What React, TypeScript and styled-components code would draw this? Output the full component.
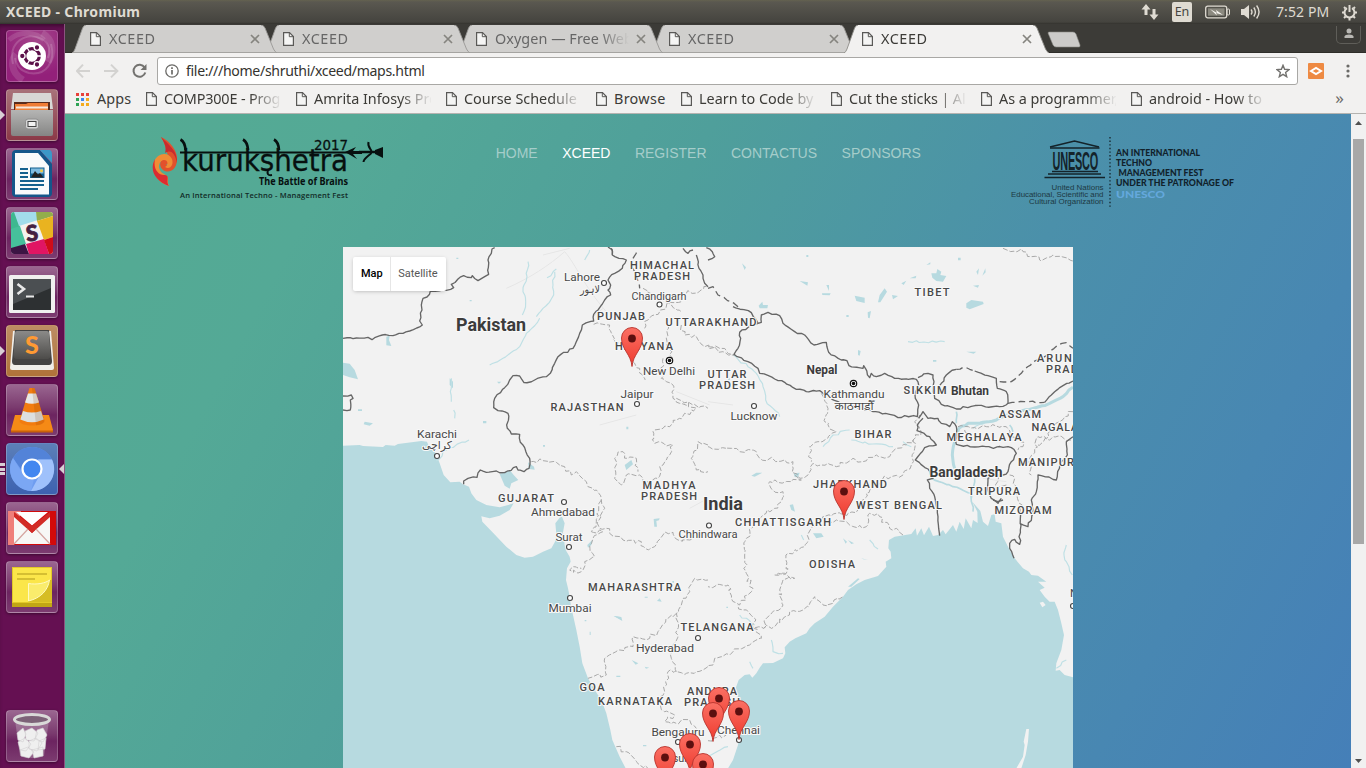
import React from 'react';
import styled, { createGlobalStyle } from 'styled-components';

const UI = '"Noto Sans", "Open Sans", sans-serif';

const Global = createGlobalStyle`
  * { box-sizing: border-box; }
  body { margin: 0; overflow: hidden; font-family: ${UI}; }
  svg { display: block; flex: none; }
`;

const Desktop = styled.div`
  width: 1366px;
  height: 768px;
  display: flex;
  flex-direction: column;
  overflow: hidden;
`;

/* ---------- top panel ---------- */

const Panel = styled.header`
  height: 24px;
  flex: none;
  display: flex;
  align-items: center;
  padding: 0 8px 0 6px;
  background: linear-gradient(#64624f 0, #5a5850 2px, #45443f 22px, #33322e 24px);
  color: #dfdbd2;
`;

const WindowTitle = styled.span`
  flex: 1;
  font-size: 14px;
  font-weight: 700;
  line-height: 22px;
  letter-spacing: 0.32px;
`;

const Keyboard = styled.span`
  width: 20px;
  height: 20px;
  margin: 0 13px 0 13px;
  border-radius: 2px;
  background: #dfdbd2;
  color: #45443f;
  font-size: 12.5px;
  line-height: 20px;
  text-align: center;
`;

const Clock = styled.span`
  margin: 0 12px 0 15px;
  font-size: 14px;
  line-height: 22px;
  letter-spacing: 0.1px;
  width: 53px;
  white-space: nowrap;
`;

const Body = styled.div`
  flex: 1;
  min-height: 0;
  display: flex;
`;

/* ---------- launcher ---------- */

const Dock = styled.aside`
  width: 65px;
  flex: none;
  display: flex;
  flex-direction: column;
  gap: 7px;
  padding: 6px 0 6px 6px;
  background: #651052;
  border-right: 1px solid #8c5380;
  box-shadow: inset 0 4px 4px -2px #3c0a31;
`;

const Tile = styled.div<{ $bg: string; $gap?: boolean }>`
  position: relative;
  width: 52px;
  height: 52px;
  flex: none;
  margin-top: ${(p) => (p.$gap ? 'auto' : 0)};
  border-radius: 4px;
  border: 1px solid rgba(255, 255, 255, 0.22);
  background: ${(p) => p.$bg};
  box-shadow: 0 1px 3px rgba(0, 0, 0, 0.4);
  display: flex;
  align-items: center;
  justify-content: center;
`;

const Running = styled.i<{ $right?: boolean }>`
  position: absolute;
  top: 20px;
  ${(p) => (p.$right ? 'right: -7px;' : 'left: -7px;')}
  border: solid transparent;
  border-width: 5px 0;
  ${(p) => (p.$right ? 'border-right: 5px solid #d8cfd5;' : 'border-left: 5px solid #d8cfd5;')}
`;

const Ticks = styled.i`
  position: absolute;
  top: 19px;
  left: -7px;
  width: 5px;
  height: 12px;
  background: repeating-linear-gradient(#d8cfd5 0 3px, transparent 3px 4.5px);
`;

/* ---------- browser chrome ---------- */

const Browser = styled.main`
  flex: 1;
  min-width: 0;
  display: flex;
  flex-direction: column;
  background: #f2f1f0;
`;

const TabStrip = styled.div`
  height: 29px;
  flex: none;
  display: flex;
  padding: 1px 1px 0 6.5px;
  background: #3c3b37;
  box-shadow: inset 0 -1px #2e2d29;
`;

const TabBox = styled.div<{ $z: number; $active?: boolean }>`
  position: relative;
  z-index: ${(p) => p.$z};
  width: 205px;
  height: 28px;
  margin-right: -12px;
  padding: 0 17px 0 18px;
  display: flex;
  align-items: center;
  flex: none;
  color: ${(p) => (p.$active ? '#3c3b37' : '#666')};
`;

const TabShape = styled.svg`
  position: absolute;
  inset: 0;
  z-index: -1;
`;

const TabText = styled.span<{ $track: number }>`
  flex: 1;
  margin-left: 8.5px;
  font-size: 14.4px;
  line-height: 26px;
  letter-spacing: ${(p) => p.$track}px;
  white-space: nowrap;
  overflow: hidden;
  mask-image: linear-gradient(to right, #000 105px, transparent 134px);
`;

const NewTab = styled.svg`
  margin: 6px 0 0 10px;
`;

const Profile = styled.div`
  width: 25px;
  height: 18px;
  margin-left: auto;
  margin-top: 1px;
  margin-right: 4px;
  border: 1px solid #5f5e59;
  border-top: 0;
  border-radius: 0 0 5px 5px;
  display: flex;
  justify-content: center;
`;

const Toolbar = styled.div`
  height: 36px;
  flex: none;
  display: flex;
  align-items: center;
  padding: 0 16px 0 11px;
`;

const Address = styled.div`
  flex: 1;
  height: 28px;
  margin: 0 10px 0 10px;
  padding: 0 7px;
  display: flex;
  align-items: center;
  background: #fff;
  border: 1px solid #a9a8a5;
  border-radius: 3px;
`;

const Url = styled.span`
  flex: 1;
  margin-left: 7px;
  font-size: 14.1px;
  line-height: 24px;
  letter-spacing: -0.33px;
  color: #34332f;
`;

const Bookmarks = styled.div`
  height: 25px;
  flex: none;
  display: flex;
  padding: 1px 22px 0 11px;
  border-bottom: 1px solid #b4b3b0;
`;

const Bookmark = styled.div<{ $w: number }>`
  width: ${(p) => p.$w}px;
  display: flex;
  align-items: center;
  height: 18px;
`;

const BookmarkText = styled.span<{ $track?: number; $fade?: boolean }>`
  max-width: 117px;
  margin-left: ${(p) => (p.$fade === undefined ? 8 : 7)}px;
  font-size: 14.4px;
  line-height: 20px;
  letter-spacing: ${(p) => p.$track ?? -0.1}px;
  white-space: nowrap;
  overflow: hidden;
  color: #3c3b37;
  mask-image: ${(p) => (p.$fade ? 'linear-gradient(to right, #000 86px, transparent 118px)' : 'none')};
`;

const More = styled.span`
  margin-left: auto;
  font-size: 17px;
  line-height: 16px;
  color: #6c6b68;
`;

/* ---------- page ---------- */

const Viewport = styled.div`
  flex: 1;
  min-height: 0;
  display: flex;
`;

const Page = styled.div`
  flex: 1;
  background: linear-gradient(118deg, #54ab92 0%, #54a996 18%, #4f9f9b 40%, #4b90aa 64%, #4887b2 84%, #457fb8 100%);
  display: flex;
  flex-direction: column;
`;

const Header = styled.div`
  height: 133px;
  flex: none;
  display: flex;
  align-items: flex-start;
`;

const Nav = styled.nav`
  display: flex;
  gap: 24.5px;
  margin: 31px 0 0 95.7px;
  width: 509.3px;
  font: 14px/16px "Liberation Sans", Arial, sans-serif;
`;

const NavItem = styled.a<{ $on?: boolean }>`
  color: ${(p) => (p.$on ? '#fff' : '#a5cdca')};
`;

const MapFrame = styled.div`
  position: relative;
  width: 730px;
  height: 521px;
  margin-left: 278px;
  overflow: hidden;
`;

const MapType = styled.div`
  position: absolute;
  left: 10px;
  top: 10px;
  display: flex;
  height: 34px;
  background: #fff;
  border-radius: 2px;
  box-shadow: 0 1px 4px -1px rgba(0, 0, 0, 0.3);
  font: 11px/33px Roboto, sans-serif;
`;

const MapButton = styled.span<{ $on?: boolean }>`
  padding: ${(p) => (p.$on ? '0 7px 0 8px' : '0 8px 0 7.5px')};
  font-weight: ${(p) => (p.$on ? 500 : 400)};
  color: ${(p) => (p.$on ? '#000' : '#565656')};
  border-right: ${(p) => (p.$on ? '1px solid #e6e6e6' : 0)};
`;

const Scroll = styled.div`
  width: 15px;
  display: flex;
  flex-direction: column;
  align-items: center;
  justify-content: space-between;
  background: #f1f1f1;
  padding: 7px 0 5px;
`;

const Thumb = styled.div`
  width: 11px;
  height: 405px;
  margin: 14px 0 auto;
  background: #a8a8a8;
`;

/* ---------- small icons ---------- */

const PageIcon = () => (
  <svg width="11" height="14" viewBox="0 0 11 14" fill="none" stroke="#5a5957">
    <path d="M.6 .6H6.5L10.4 4.5V13.4H.6Z" strokeWidth="1.2" fill="#f5f5f4" />
    <path d="M6.3 .6V4.7H10.4" strokeWidth="1" />
  </svg>
);

const Arrow = ({ flip }: { flip?: boolean }) => (
  <svg width="28" height="16" viewBox="0 0 28 16" fill="none" stroke="#d3d2d0" strokeWidth="2">
    <path d={flip ? 'M0 8H13M7 1.6L13.4 8L7 14.4' : 'M14 8H1M7 1.6L.9 8L7 14.4'} />
  </svg>
);

const Tab = ({ text, z, active }: { text: string; z: number; active?: boolean }) => (
  <TabBox $z={z} $active={active}>
    <TabShape width="205" height="28" viewBox="0 0 205 28">
      <path
        d="M0 28Q2 27 3 24L10.600 3Q12 0 14 0H189Q191.500 0 193 3L201.500 24Q203 27 205 28Z"
        fill={active ? '#f2f1f0' : '#d0cfcd'}
      />
      <path
        d="M0 28Q2 27 3 24L10.600 3Q12 0 14 0M189 0Q191.500 0 193 3L201.500 24Q203 27 205 28"
        fill="none"
        stroke={active ? '#8d8c88' : '#9a9996'}
        strokeWidth=".9"
      />
      {!active && <path d="M1 27.500H204" stroke="#a5a4a1" />}
    </TabShape>
    <PageIcon />
    <TabText $track={text === 'XCEED' ? 0.55 : 0.05}>{text}</TabText>
    <svg width="10" height="10" viewBox="0 0 10 10" stroke="#85847f" strokeWidth="1.700">
      <path d="M1 1L9 9M9 1L1 9" />
    </svg>
  </TabBox>
);

/* ---------- launcher artwork ---------- */

const Art = ({ children }: { children: React.ReactNode }) => (
  <svg width="52" height="52" viewBox="0 0 52 52">
    {children}
  </svg>
);

const UbuntuArt = () => (
  <Art>
    <g fill="none" stroke="#fff" strokeOpacity=".16">
      <path d="M7 34C2 12 20 1 36 9C43 13 45 21 42 28" strokeWidth="2" />
      <path d="M45 14C50 32 40 46 23 43C15 41 11 37 9 28" strokeWidth="2" />
      <path d="M17 50C4 42 5 30 10 24" strokeWidth="7" strokeOpacity=".12" />
      <path d="M36 3C48 10 48 22 42 32" strokeWidth="7" strokeOpacity=".12" />
      <path d="M3 10C14 0 30 2 38 10" strokeWidth="5" strokeOpacity=".12" />
    </g>
    <circle cx="26" cy="26" r="14" fill="#fff" />
    <circle cx="26" cy="26" r="7.300" fill="none" stroke="#5b1049" strokeWidth="3.200" />
    <g stroke="#fff" strokeWidth="1.300">
      <path d="M26 26L36 26M26 26L21 34.500M26 26L21 17.500" />
      <circle cx="26" cy="26" r="4.500" fill="#fff" />
      <circle cx="16.300" cy="26" r="2.800" fill="#5b1049" />
      <circle cx="31" cy="17.500" r="2.800" fill="#5b1049" />
      <circle cx="31" cy="34.500" r="2.800" fill="#5b1049" />
    </g>
  </Art>
);

const FilesArt = () => (
  <Art>
    <path d="M7 4H45L47 20H5Z" fill="#d8d8d6" />
    <path d="M8 13H44V24H8Z" fill="#5a2c1c" />
    <path d="M9 15H20L22 14H42V24H9Z" fill="#ef7d36" />
    <path d="M10 17.500H42V24H10Z" fill="#f6e8dc" />
    <path d="M10 19.500H42V24H10Z" fill="#f0843c" />
    <path d="M5 21H47V45Q47 47 45 47H7Q5 47 5 45Z" fill="url(#steel)" />
    <rect x="19.500" y="30" width="13" height="10" rx="2.500" fill="#d6d6d6" stroke="#8e8e8e" />
    <rect x="22" y="32.500" width="8" height="5" fill="#f2f2f2" stroke="#444" strokeWidth="1" />
  </Art>
);

const WriterArt = () => (
  <Art>
    <path d="M10 2H34L46 16V45Q46 49 42 49H10Q6 49 6 45V6Q6 2 10 2Z" fill="#14568a" />
    <path d="M34 2H44Q46 3 46 6V15Z" fill="#3b98c8" />
    <path d="M9 5H32L43 18V46.500H9Z" fill="#f8fafb" />
    <g fill="#14618f">
      <path d="M14 20H22V22H14ZM14 24H22V26H14ZM14 28H22V30H14ZM14 32H38V34H14ZM14 36H38V38H14ZM14 40H32V42H14Z" />
      <rect x="24" y="19.500" width="14.500" height="10.500" />
    </g>
    <rect x="25" y="20.500" width="12.500" height="5" fill="#7fbbe0" />
    <path d="M25 29.500L29 23L32 26.500L34 25L37.500 29.500Z" fill="#222" />
    <circle cx="35.500" cy="22.700" r="1.500" fill="#f0cb45" />
  </Art>
);

const SlackArt = () => (
  <Art>
    <clipPath id="slack"><rect x="5" y="5" width="42" height="42" rx="3" /></clipPath>
    <g clipPath="url(#slack)">
      <rect x="5" y="5" width="42" height="42" fill="#f4f1ee" />
      <path d="M5 5H9L14 20L5 23Z" fill="#3eb890" />
      <path d="M8 5H30L32 13L13 19Z" fill="#a2dcea" />
      <path d="M30 5H47V9L31 14Z" fill="#92ad4b" />
      <path d="M31 14L47 9V30L38 33Z" fill="#e9b320" />
      <path d="M5 22L14 19L20 37L5 42Z" fill="#46c09b" />
      <path d="M20 37L38 32L43 47H23Z" fill="#e01563" />
      <path d="M38 33L47 30V47H43Z" fill="#cf0c19" />
      <path d="M5 41L19 37L23 47H5Z" fill="#3c1444" />
    </g>
    <text x="26" y="34" textAnchor="middle" fontFamily="Lato, sans-serif" fontWeight="900" fontSize="22" fill="#46203f" stroke="#46203f" strokeWidth=".8" transform="rotate(-6 26 26)">S</text>
  </Art>
);

const TerminalArt = () => (
  <Art>
    <rect x="3" y="9" width="46" height="38" rx="1.500" fill="#f0f0ef" />
    <rect x="7" y="13" width="38" height="31" fill="#2d3032" />
    <path d="M7 13H45V22L7 38Z" fill="#595d60" opacity=".7" />
    <path d="M11.500 18L18 23L11.500 28" fill="none" stroke="#e8e8e8" strokeWidth="2.600" />
    <path d="M20 30.500H28" stroke="#e8e8e8" strokeWidth="2" />
  </Art>
);

const SublimeArt = () => (
  <Art>
    <path d="M7 6H45L48 43Q48 45 46 45H6Q4 45 4 43Z" fill="#f0eee9" />
    <path d="M9 5H43L46 36Q46 40 43 40H9Q6 40 6 36Z" fill="#444342" />
    <path d="M11 6H41Q43 6 43 8L44.500 30Q44.500 34 41 34H11Q7.500 34 7.500 30L9 8Q9 6 11 6Z" fill="url(#key)" />
    <text x="26" y="28.500" textAnchor="middle" fontFamily="Lato, sans-serif" fontWeight="900" fontSize="25" fill="#ff9a33">S</text>
  </Art>
);

const VlcArt = () => (
  <Art>
    <path d="M9 31H43L47 46Q47 48 45 48H7Q5 48 5 46Z" fill="#f58a16" />
    <path d="M5 46.500H47V48.500H5Z" fill="#c9620a" />
    <path d="M23.500 4H28.500L38.500 37C38 43 14 43 13.500 37Z" fill="#f27c10" />
    <path d="M22 9.500H30L33 18.500Q26 21 19 18.500Z" fill="#e6e8e8" />
    <path d="M17 27Q26 30 35 27L37.700 35.500Q26 41 14.300 35.500Z" fill="#dcdfe0" />
    <path d="M26 4H28.500L38.500 37Q37 41 30 41.300Z" fill="#7a3500" opacity=".16" />
  </Art>
);

const ChromiumArt = () => (
  <Art>
    <circle cx="26" cy="26" r="22" fill="#6f9df0" />
    <path d="M26 4A22 22 0 0 1 46 16.500H26L17 29L7 15A22 22 0 0 1 26 4Z" fill="#5383d8" />
    <path d="M7 15L17 31L28 36L25 48A22 22 0 0 1 7 15Z" fill="#7ba7f4" />
    <path d="M46 16.500A22 22 0 0 1 25 48L36 28L32 16.500Z" fill="#9fc1fb" />
    <circle cx="26" cy="26" r="9.500" fill="#4387f0" stroke="#fff" strokeWidth="2.200" />
  </Art>
);

const GmailArt = () => (
  <Art>
    <rect x="2" y="9" width="48" height="34" fill="#d20a0a" />
    <path d="M2 9H15L8 43H2Z" fill="#ef7f7a" />
    <path d="M8 14L26 31L44 14V42H8Z" fill="#f7f7f5" />
    <path d="M10 10H42L26 23.500Z" fill="#fff" />
    <path d="M8 10L26 24L44 10V15L26 31L8 15Z" fill="#d22c26" />
    <path d="M8 42L22 27M44 42L30 27" stroke="#d5a5a0" strokeWidth="1.200" />
  </Art>
);

const NotesArt = () => (
  <Art>
    <rect x="6" y="40" width="40" height="6" fill="#c1a615" />
    <rect x="6.500" y="6.500" width="39" height="35" fill="#fbe64a" stroke="#e2c928" />
    <path d="M11 13H41M11 18H29" stroke="#d5bf32" strokeWidth="2" />
    <path d="M22 41L27 33L43 19H46V41Z" fill="#d6bd24" />
    <path d="M22.500 40V22.500C31 24 40 22 43.500 19C42 29 35 37 22.500 40Z" fill="#faec6c" stroke="#fffac0" />
  </Art>
);

const TrashArt = () => (
  <Art>
    <path d="M9 10L14 46Q26 50 38 46L43 10Z" fill="#d8cdd6" opacity=".3" />
    <g fill="#efefef" stroke="#d2d0d1" strokeWidth=".6">
      <path d="M11 23L17 18L20 24L17 32L12 30ZM19 21L26 18L32 23L28 31L20 30ZM31 20L37 18L41 25L37 32L29 29ZM12 32L19 28L25 34L20 41L14 40ZM23 31L30 28L36 33L31 41L23 39ZM33 31L40 28L39 39L32 40ZM14 40L22 37L28 42L23 48L15 46ZM26 40L37 37L37 46L28 48Z" />
    </g>
    <ellipse cx="26" cy="9.500" rx="17.500" ry="5" fill="#7d6278" stroke="#d9d9d8" strokeWidth="3" />
  </Art>
);

/* ---------- logos ---------- */

const KurukshetraLogo = styled.svg`
  margin: 16px 0 0 85px;
`;

const UnescoLogo = styled.svg`
  margin-top: 18px;
`;

const Kurukshetra = () => (
  <KurukshetraLogo width="250" height="80" viewBox="150 130 250 80">
    <path d="M161 137C170 141 178 151 177 161C176 170 169 174 163 170C158 166 160 158 166 158C172 158 171 165 166 164C171 170 174 160 168 155C166 151 166 145 161 137Z" fill="#e2512c" />
    <path d="M161 137C168 144 178 151 177 163C175 153 171 149 165 153C167 147 164 142 161 137Z" fill="#c92b2f" />
    <path d="M169 186C158 183 151 172 154 162C157 153 168 151 172 159C174 165 170 170 165 167C169 165 168 159 163 160C157 163 158 171 164 174C171 178 166 180 169 186Z" fill="#f08c35" />
    <path d="M169 186C155 181 149 170 155 159C153 169 158 175 164 175C171 175 165 181 169 186Z" fill="#dc2c32" />
    <g fill="none" stroke="#07100f">
      <path d="M180 152.500H350" strokeWidth="1.800" />
      <path d="M180.500 139.500Q185 142 185.500 150M243 139.500Q247.500 142 248 150M274 139.500Q278.500 142 279 150" strokeWidth="2.600" />
      <path d="M359 152H382" strokeWidth="2.500" />
      <path d="M368.500 142C367 148 373 150 371 152C373 154 364 157 363.500 162" strokeWidth="2" />
    </g>
    <path d="M345 152L356 147L353 151L362 151V154L353 154L357 159Z" fill="#07100f" />
    <path d="M375 150L383 147V158L375 154Z" fill="#07100f" />
    <text x="182" y="170.500" textLength="166" lengthAdjust="spacingAndGlyphs" fontFamily="'DejaVu Sans', sans-serif" fontSize="30" fill="#07100f" stroke="#07100f" strokeWidth=".3">kurukshetra</text>
    <path d="M268 170Q266 176 272 175" fill="none" stroke="#07100f" strokeWidth="2" />
    <text x="314" y="150" textLength="34" lengthAdjust="spacingAndGlyphs" fontFamily="'DejaVu Sans', sans-serif" fontSize="14" fill="#07100f" stroke="#07100f" strokeWidth=".3">2017</text>
    <text x="259" y="185" textLength="89" lengthAdjust="spacingAndGlyphs" fontFamily="'Noto Sans', sans-serif" fontWeight="700" fontSize="11" fill="#07100f">The Battle of Brains</text>
    <text x="180" y="198.300" textLength="168" lengthAdjust="spacing" fontFamily="'Open Sans', sans-serif" fontSize="7.600" fontWeight="600" fill="#122b27">An International Techno - Management Fest</text>
  </KurukshetraLogo>
);

const unescoLines: [string, number, number, number][] = [
  ['AN INTERNATIONAL', 1116, 155.500, 84],
  ['TECHNO', 1116, 165.500, 36],
  ['MANAGEMENT FEST', 1118.500, 175.600, 85],
  ['UNDER THE PATRONAGE OF', 1116, 185.600, 118],
];

const Unesco = () => (
  <UnescoLogo width="240" height="80" viewBox="1005 132 240 80">
    <g fill="none" stroke="#14232a" strokeWidth="1.600">
      <path d="M1050 147L1074.500 141L1099 147" />
      <path d="M1050 148H1099.500M1052 171.500H1098M1048 174H1101M1044.500 177.500H1105" />
      <path d="M1110 137V209" strokeWidth="1.300" strokeDasharray="1.400 2.200" />
    </g>
    <g transform="translate(1052.500 170) scale(.42 1)" fontFamily="'Liberation Sans', sans-serif" fontWeight="700" fontSize="26" fill="#14232a">
      <text x="0" y="0" textLength="109">UNESCO</text>
    </g>
    <g fontFamily="'Liberation Sans', sans-serif" fontSize="6.600" fill="#1d3943">
      <text x="1051.500" y="190" textLength="52" lengthAdjust="spacingAndGlyphs">United Nations</text>
      <text x="1011" y="197" textLength="92.500" lengthAdjust="spacingAndGlyphs">Educational, Scientific and</text>
      <text x="1029" y="204" textLength="74.500" lengthAdjust="spacingAndGlyphs">Cultural Organization</text>
    </g>
    <g fontFamily="Lato, sans-serif" fontSize="8.400" fontWeight="900" fill="#11222b">
      {unescoLines.map(([t, x, y, w]) => (
        <text key={t} x={x} y={y} textLength={w} lengthAdjust="spacingAndGlyphs">{t}</text>
      ))}
      <text x="1116" y="198.300" textLength="49" lengthAdjust="spacingAndGlyphs" fontSize="9.400" fill="#64a8dc">UNESCO</text>
    </g>
  </UnescoLogo>
);

/* ---------- map data (thirds of a pixel, origin 343,245) ---------- */

const WATER = [
  'M0 602L50 600L60 603L120 606L128 600L155 602L165 597L235 588L252 590L258 605L278 625L290 655L302 690L322 712L350 710L360 718L378 725L385 745L400 765L430 780L470 787L512 775L500 795L470 812L440 820L415 814L418 830L450 863L490 905L520 930L545 938L570 935L600 920L625 910L636 890L640 868L637 835L650 818L657 815L665 835L660 862L665 900L668 915L680 935L683 950L672 970L669 1005L675 1030L680 1055L684 1085L690 1110L700 1155L710 1205L718 1255L735 1300L755 1335L775 1365L790 1405L802 1455L808 1485L830 1535L848 1570H0Z',
  'M1155 1570L1170 1545L1185 1500L1190 1465L1190 1415L1187 1365L1178 1330L1187 1305L1205 1290L1220 1288L1228 1298L1240 1285L1250 1268L1260 1255L1290 1254L1320 1240L1327 1225L1325 1207L1340 1190L1357 1180L1390 1165L1400 1150L1415 1135L1445 1115L1470 1085L1500 1055L1515 1035L1540 1018L1565 1005L1605 993L1630 965L1628 950L1645 940L1643 920L1636 910L1638 885L1655 875L1705 867L1718 850L1722 872L1735 850L1743 871L1758 845L1770 873L1785 870L1800 855L1808 868L1830 840L1840 860L1850 830L1862 852L1868 820L1885 850L1890 825L1904 834L1903 800L1888 770L1912 798L1920 830L1935 843L1945 810L1955 808L1958 830L1975 835L1980 875L2000 915L2015 940L2040 970L2058 980L2065 990L2085 992L2110 1010L2085 1010L2105 1028L2090 1035L2105 1055L2120 1070L2135 1070L2145 1095L2155 1135L2163 1170L2155 1215L2140 1255L2138 1277L2150 1275L2165 1290L2190 1297V1570Z',
  'M0 353L20 356L35 375L45 403L20 397L0 390Z',
  'M470 687L500 675L512 690L526 705L505 715L500 731L485 722Z',
  'M555 652L573 665L575 674L558 672Z',
  'M130 275L140 272L138 285L145 303L130 301Z',
  'M1765 85L1780 85L1783 72L1795 80L1792 90L1810 93L1800 110L1780 108L1768 98Z',
  'M1870 175L1885 165L1920 170L1922 177L1880 193L1870 188Z',
  'M1535 152L1565 158L1565 174L1540 168Z M1610 150L1625 130L1632 140L1612 172L1605 172Z M1647 150L1665 153L1650 163Z M1675 115L1690 107L1682 120Z M1370 108L1395 112L1393 122Z M1437 145L1463 145L1460 151L1438 150Z M1247 182L1258 170L1260 180L1275 180L1273 190L1250 190Z M1574 202L1584 198L1580 220L1575 218Z M1890 122L1908 120L1905 128Z M1918 92L1927 70L1928 82Z M1900 80L1908 70L1905 90Z M1545 315L1553 318L1550 332L1545 330Z',
  'M1225 692L1240 683L1258 683L1235 695Z M1352 685L1370 683L1365 697L1355 696Z M1410 865L1435 865L1442 875L1420 880Z M1515 1025L1545 1000L1550 1002L1525 1025Z M845 660L865 645L870 658L850 675Z M812 1113L835 1116L838 1128Z M733 900L748 885L745 900L735 908Z M320 400L330 410L330 430L320 420Z M462 410L475 410L468 416Z M65 530L90 535L80 542L62 538Z',
  'M1500 880L1512 890L1508 896Z M1340 780L1350 778L1356 800L1345 795Z M932 822L950 820L948 826L940 828L942 845L934 845Z',
];

const RIVERS = [
  'M555 50L552 95L540 140L548 170L538 210',
  'M635 80L630 120L632 150L600 190L580 215',
  'M590 220L550 265L530 305L480 340L440 360',
  'M325 400L322 440L325 470M332 495L335 520',
  'M640 72L612 98M740 15L725 45',
  'M1170 330L1215 365L1240 385L1260 425L1268 465L1290 490L1310 515',
  'M1440 605L1470 570L1520 555M1525 585L1590 597L1650 605M1680 590L1705 605M1890 550L1930 530',
  'M1190 1110L1235 1140M1375 870L1382 885M1580 885L1605 912M1285 1185L1290 1220L1320 1225M1220 1250L1230 1270',
  'M1695 290L1805 290M1560 475L1580 485M2170 900L2163 930L2178 965L2188 990M2140 1270L2170 1245M1100 1532L1155 1505',
  'M280 648L310 615L378 585',
];

const COUNTRY_LINES = [
  'M0 280L40 279L75 277L87 284L95 278L118 270L150 272L180 265L200 258L238 240L230 228L237 195L235 180L240 160L252 156L262 138L310 136L332 128L325 118L345 102L362 92L385 98L388 92L405 107L425 95L437 88L435 45L445 25L447 12L455 8',
  'M795 6L808 15L808 30L828 40L850 45L838 70L815 85L795 105L803 120L795 135L803 150L785 165L765 195L752 208L752 228L718 240L710 265L690 310L645 335L635 355L622 385L610 395L575 405L543 413L530 393L510 392L500 405L485 428L455 460L452 488L465 497L495 505L493 550L505 567L530 568L532 592L545 608L560 640L558 670L543 680L525 675L520 665L485 683L460 678L430 682L412 675L402 697L375 700L362 708L362 718',
  'M0 453L25 450L30 460L22 465L22 495L0 495',
  'M1170 185L1225 203L1245 235L1255 232L1255 210L1275 202L1310 212L1320 235L1355 260L1385 270L1413 300L1450 292L1457 322L1495 345L1512 347L1518 362L1560 370L1562 362L1580 398L1585 385L1600 395L1625 385L1655 400L1720 403L1727 420L1718 440L1717 460L1727 480L1723 515L1685 512L1665 518L1640 508L1590 500L1535 485L1485 470L1445 450L1430 437L1390 440L1360 433L1325 412L1295 402L1250 385L1245 370L1215 350L1173 328L1185 310L1193 280L1190 262L1225 240L1245 235',
  'M1725 398L1755 385L1770 390L1773 410L1770 440L1775 460L1795 478L1840 492L1885 484L1980 484L1995 475L1990 440L1963 430L1960 400L1935 392L1895 378M1840 373L1810 390L1795 415L1785 430',
  'M2105 472L2125 450L2135 440L2160 422L2190 408',
  'M1727 520L1740 500L1755 520L1785 520L1795 535L1820 545L1828 530L1840 545L1840 598L1895 606L2005 608L2020 625L2005 650L1995 680L1980 690L1955 690L1935 700L1933 730L1945 760L1965 775L1975 760M1740 520L1723 540L1722 557L1760 575L1780 600L1745 608L1717 645L1755 672L1770 700L1753 705L1760 730L1775 755L1780 785L1785 815L1790 872',
  'M2190 575L2170 590L2173 630L2155 650L2140 705L2085 690L2080 740L2065 765L2070 805L2055 845L2030 835M2030 785L2032 855L2030 898L2015 883L2000 895L2000 910L2013 940',
  'M1095 45L1115 35L1108 20L1090 8M1060 30L1068 70L1080 90L1085 115L1095 125M1020 10L1035 25L1050 15',
  'M1950 765L1965 770L1980 765',
];

const DISPUTED = [
  'M805 10L808 30M870 40L885 15M865 60L880 90L890 130M1095 130L1110 125L1125 150L1165 170L1185 185',
  'M1840 373L1870 368L1895 378M1970 410L2005 410L2035 385L2070 350L2105 335L2145 300L2170 293L2190 310M1995 475L2045 470L2105 472',
];

const STATE_LINES = [
  'M565 650L600 647L640 652L665 665L685 690L700 680L718 700L735 725L760 735L775 765L785 790L765 830L770 850L790 850L800 865L840 885L895 890L910 912L935 905L960 870L990 862L1005 885L1040 885L1060 860L1095 865',
  'M752 238L800 240L810 285L840 290M905 250L915 225L950 200L975 175L1015 170L1015 145L1070 138L1095 125',
  'M900 130L950 160L985 180L1015 200M975 240L970 300L990 340M1015 240L1025 270L1060 275L1085 305L1130 310L1175 330',
  'M870 350L890 370L905 405M960 340L955 400L985 415L990 460L1010 475L1050 480L1095 490M1000 460L1060 490L1010 520L960 550L930 560L935 595L990 600L980 630L960 660L945 700L900 712L890 690L850 690L835 720L815 700L815 640L840 620L855 640L880 640L885 680',
  'M1095 600L1065 590L1045 640L1060 675L1095 680M1095 605L1130 610L1165 610L1190 620L1240 620L1250 640L1350 650L1355 685L1370 700L1395 690L1410 655L1435 660L1455 655L1480 665L1530 640L1560 650L1600 630L1640 635L1660 610L1690 600L1710 585L1735 560L1715 530L1730 510',
  'M1435 445L1455 490L1445 530L1480 560L1425 590L1400 605L1405 650M1710 585L1715 610L1705 660L1680 690L1620 700L1590 730L1570 745L1555 790L1515 805L1440 815L1405 850L1385 905L1335 925L1330 985L1300 990M1355 690L1375 705L1280 710L1290 735L1320 740L1315 770L1295 790L1260 810L1240 830L1210 880L1205 930L1210 985L1230 1030L1190 1080L1165 1060L1155 1020L1095 1025',
  'M1440 815L1450 830L1510 830L1520 840L1570 845L1580 805L1610 815L1640 850L1660 850L1680 870M1295 990L1325 985L1355 1000L1320 1005L1310 1035L1320 1080L1270 1120L1262 1150L1230 1150L1235 1120L1185 1080',
  'M1262 1150L1310 1135L1340 1100L1380 1095L1415 1055L1440 1080L1470 1075L1500 1055M1230 1150L1255 1180L1220 1200L1170 1220L1115 1240L1110 1260L1080 1275L1030 1285L975 1280L965 1340L950 1370L965 1400L995 1410L965 1430L1000 1435L1040 1425L1060 1450',
  'M1095 1005L1055 1000L1040 1040L1020 1060L1015 1080L1000 1105L1005 1170L990 1200L985 1240L1000 1280M1000 1105L975 1120L945 1160L920 1180L870 1175L870 1205L830 1215L785 1240L790 1290L750 1295L735 1300',
  'M745 860L780 860L750 880L740 900L755 935L725 950L715 980L680 975L690 965L715 970M775 765L760 830L745 860',
  'M820 1505L850 1520L890 1560L915 1570M1095 1487L1150 1470',
  'M1845 545L1900 550L1930 545L1990 545L2000 570L2035 580L2040 605L2025 615M2190 500L2150 530L2115 565L2110 580L2085 575L2075 610L2060 640L2065 690',
  'M2085 600L2130 575L2190 585M2000 690L2015 700L2015 740L2035 790M1990 720L1960 730L1965 690M1865 555L1880 570M1095 305L1140 320L1173 330',
  'M1980 10L2040 20L2090 45L2130 30L2190 48',
];

const SPECKS = 'M340 38h6v4h-6ZM380 165h6v4h-6ZM45 493h12v5h-12ZM420 528h10v7h-10ZM600 600h6v5h-6ZM1197 55l8 20 4-8ZM1390 30h6v6h-6ZM1750 60l12 -8v6ZM1700 100l20 -8 -2 8ZM1845 38h8v8h-8ZM1450 120l8 0 0 18ZM1510 210h7v6h-7ZM1770 345h10v5h-10ZM1870 320l30 0 -8 6ZM1555 940l20 5 -14 -2ZM950 1060l-8 8 14 2ZM812 1113l20 3 3 8ZM866 1245l20 10 -8 4ZM905 1265l14 3 -10 3ZM820 1292h12v4h-12ZM820 1410l12 14ZM740 1160h3v10h-3ZM905 1055h9v3h-9ZM988 1008h5v5h-5ZM1150 1085h5v4h-5ZM725 1125h5v4h-5ZM1515 885l18 10 -8 2ZM900 1500h10v4h-10ZM1155 400h6v5h-6ZM850 545h6v8h-6Z';

// Splits each segment into short steps and nudges them, for a natural border line.
const rough = (d: string, amount: number, step: number) => {
  let seed = d.length * 31 + 7;
  const rnd = () => {
    seed = (seed * 1103515245 + 12345) % 2147483648;
    return seed / 2147483648 - 0.5;
  };
  return d
    .split('M')
    .filter(Boolean)
    .map((part) => {
      const pts = part.split('L').map((p) => p.trim().split(' ').map(Number));
      let out = `M${pts[0][0]} ${pts[0][1]}`;
      for (let i = 1; i < pts.length; i++) {
        const [ax, ay] = pts[i - 1];
        const [bx, by] = pts[i];
        const n = Math.max(1, Math.round(Math.hypot(bx - ax, by - ay) / step));
        for (let k = 1; k < n; k++) {
          const x = ax + ((bx - ax) * k) / n + rnd() * amount;
          const y = ay + ((by - ay) * k) / n + rnd() * amount;
          out += `L${x.toFixed(1)} ${y.toFixed(1)}`;
        }
        out += `L${bx} ${by}`;
      }
      return out;
    })
    .join('');
};

type Kind = 's' | 'c' | 'n' | 'm' | 'l';
type Label = [string, number, number, number, Kind];

// text, centre x, baseline, width, kind (state, city, country by size)
const LABELS: Label[] = [
  ['Pakistan', 491, 331, 70, 'l'],
  ['India', 723, 510, 40, 'l'],
  ['Bangladesh', 966, 477, 73, 'm'],
  ['Nepal', 822, 374, 31, 'n'],
  ['Bhutan', 970, 395, 38, 'n'],
  ['HIMACHAL', 662, 269, 64, 's'],
  ['PRADESH', 662, 280, 56, 's'],
  ['PUNJAB', 621, 320, 48, 's'],
  ['UTTARAKHAND', 711, 326, 91, 's'],
  ['HARYANA', 644, 350, 58, 's'],
  ['UTTAR', 727, 378, 39, 's'],
  ['PRADESH', 727, 389, 56, 's'],
  ['RAJASTHAN', 587, 411, 73, 's'],
  ['GUJARAT', 526, 502, 56, 's'],
  ['MADHYA', 669, 489, 53, 's'],
  ['PRADESH', 669, 500, 56, 's'],
  ['TIBET', 932, 296, 35, 's'],
  ['SIKKIM', 925, 394, 43, 's'],
  ['ARUNACHAL', 1077, 362, 80, 's'],
  ['PRADESH', 1074, 373, 56, 's'],
  ['ASSAM', 1020, 418, 42, 's'],
  ['NAGALAND', 1063, 431, 63, 's'],
  ['BIHAR', 873, 438, 37, 's'],
  ['MEGHALAYA', 984, 441, 75, 's'],
  ['MANIPUR', 1046, 466, 56, 's'],
  ['JHARKHAND', 850, 488, 74, 's'],
  ['TRIPURA', 994, 495, 52, 's'],
  ['WEST BENGAL', 899, 509, 86, 's'],
  ['MIZORAM', 1023, 514, 57, 's'],
  ['CHHATTISGARH', 783, 526, 96, 's'],
  ['ODISHA', 832, 568, 46, 's'],
  ['MAHARASHTRA', 634.500, 591, 93, 's'],
  ['TELANGANA', 717, 631, 73, 's'],
  ['GOA', 592, 691, 25, 's'],
  ['ANDHRA', 712, 695, 50, 's'],
  ['KARNATAKA', 635, 705, 74, 's'],
  ['PRADESH', 712, 706, 56, 's'],
  ['Lahore', 582, 281, 36, 'c'],
  ['لاہور', 590, 293, 20, 'c'],
  ['Chandigarh', 659, 300, 55, 'c'],
  ['New Delhi', 669, 375, 52, 'c'],
  ['Jaipur', 637, 398, 33, 'c'],
  ['Lucknow', 754, 420, 47, 'c'],
  ['Kathmandu', 854, 398, 61, 'c'],
  ['काठमाडौँ', 854, 410, 39, 'c'],
  ['Karachi', 437, 438, 40, 'c'],
  ['کراچی', 437, 449, 30, 'c'],
  ['Ahmedabad', 563, 516, 64, 'c'],
  ['Chhindwara', 708, 538, 59, 'c'],
  ['Surat', 569, 541, 27, 'c'],
  ['Mumbai', 570, 612, 43, 'c'],
  ['Hyderabad', 665, 652, 58, 'c'],
  ['Bengaluru', 678, 736, 53, 'c'],
  ['Chennai', 738.500, 734, 43, 'c'],
  ['Mysuru', 676, 762, 36, 'c'],
  ['Naypyidaw', 1098, 597, 56, 'c'],
];

const DOTS = [[604, 283], [659.500, 304.500], [637, 404], [754, 406], [437, 456], [564, 502], [569, 547], [709, 525.500], [570, 598], [698, 638], [678, 742], [739, 740], [1073, 606]];
const CAPITALS = [[669.500, 360.500], [853.500, 383.500]];
const PINS = [[632, 366.500], [844, 519.500], [719, 726.500], [713, 741.500], [739, 739.500], [690, 772.500], [665, 785.500], [703, 792.500]];

const SIZES = { s: 11, c: 11, n: 12, m: 14, l: 18 };
const WEIGHTS = { s: 500, c: 400, n: 700, m: 700, l: 700 };

const IndiaMap = () => (
  <svg width="730" height="521" viewBox="343 247 730 521">
    <rect x="343" y="247" width="730" height="521" fill="#f2f2f2" />
    <g transform="translate(343 245) scale(.33333)" strokeLinejoin="round" strokeLinecap="butt">
      <path d="M490 130C560 100 620 60 665 20M665 20C700 60 720 120 790 200M880 510L770 540M1000 440L1100 480M1095 470L1170 480M600 30L680 10M1920 700L1990 710M1040 790L1095 760M780 190L750 215" fill="none" stroke="#e6e6e6" strokeWidth="3" />
      {WATER.map((d) => <path key={d} d={d} fill="#b7dae0" />)}
      <path d={SPECKS} fill="#b7dae0" />
      {RIVERS.map((d) => <path key={d} d={rough(d, 7, 12)} fill="none" stroke="#bfe0e5" strokeWidth="3.500" />)}
      <path d={rough('M2190 427L2160 455L2120 475L2070 490L2010 502L1960 525L1920 532L1875 535L1848 550L1835 590L1828 630L1835 670', 5, 12)} fill="none" stroke="#b7dae0" strokeWidth="9" />
      <path d={rough('M1765 700L1830 725L1885 745L1890 800M1895 700L1885 760M1840 500L1840 535M2000 540L2010 560', 5, 12)} fill="none" stroke="#b7dae0" strokeWidth="5" />
      <path d="M2050 1452L2058 1452L2055 1490L2048 1530L2035 1570H2020L2040 1535L2045 1500L2042 1490ZM2090 1073L2100 1070L2108 1080L2098 1087Z" fill="#f2f2f2" />
      {STATE_LINES.map((d) => <path key={d} d={rough(d, 13, 10)} fill="none" stroke="#a6a6a6" strokeWidth="2.900" strokeDasharray="15 6" />)}
      {DISPUTED.map((d) => <path key={d} d={rough(d, 5, 12)} fill="none" stroke="#666" strokeWidth="4" strokeDasharray="20 12" />)}
      {COUNTRY_LINES.map((d) => <path key={d} d={rough(d, 6, 11)} fill="none" stroke="#666" strokeWidth="4" />)}
    </g>
    {DOTS.map(([x, y]) => <circle key={x + y * 9} cx={x} cy={y} r="2.500" fill="#fff" stroke="#444" strokeWidth="1.100" />)}
    {CAPITALS.map(([x, y]) => (
      <g key={x}>
        <circle cx={x} cy={y} r="3.200" fill="#fff" stroke="#111" strokeWidth="1.200" />
        <circle cx={x} cy={y} r="1.800" fill="#111" />
      </g>
    ))}
    <g fontFamily="Roboto, 'Noto Sans', 'DejaVu Sans', sans-serif" textAnchor="middle" stroke="#f8f8f8" strokeWidth="2.200" strokeLinejoin="round" style={{ paintOrder: 'stroke' }}>
      {LABELS.map(([t, x, y, w, k]) => (
        <text
          key={t + x + y}
          x={x}
          y={y}
          textLength={w}
          lengthAdjust={k === 's' ? 'spacing' : 'spacingAndGlyphs'}
          fontSize={SIZES[k]}
          fontWeight={WEIGHTS[k]}
          fill={k === 'l' || k === 'm' || k === 'n' ? '#3c3c3c' : '#484848'}
        >
          {t}
        </text>
      ))}
    </g>
    {PINS.map(([x, y]) => (
      <g key={x} transform={`translate(${x} ${y})`}>
        <path d="M0 0C-.9 -12 -10.500 -17 -10.500 -28.500A10.500 10.500 0 0 1 10.500 -28.500C10.500 -17 .9 -12 0 0Z" fill="url(#pin)" stroke="#b8332c" strokeWidth=".9" />
        <circle cy="-28" r="3.900" fill="#5c0f0f" />
      </g>
    ))}
  </svg>
);

const glass = 'linear-gradient(#9a6690 0, #7a3a6e 45%, #6c2460 60%, #7c3b70 100%)';

const bookmarks: [string, number, boolean, number][] = [
  ['COMP300E - Programming', 150, true, -0.15],
  ['Amrita Infosys Project', 150, true, -0.05],
  ['Course Schedule', 150, true, 0],
  ['Browse', 85, false, 0.3],
  ['Learn to Code by Doing', 150, true, 0],
  ['Cut the sticks | Algorithms', 150, true, -0.1],
  ['As a programmer, what', 150, true, -0.05],
  ['android - How to', 150, true, 0],
];

export default function App() {
  return (
    <Desktop>
      <Global />
      <svg width="0" height="0" style={{ position: 'absolute' }}>
        <defs>
          <linearGradient id="pin" x2="0" y2="1"><stop stopColor="#fb7064" /><stop offset="1" stopColor="#ee3a2e" /></linearGradient>
          <linearGradient id="steel" x2="0" y2="1"><stop stopColor="#b5b5b4" /><stop offset="1" stopColor="#858584" /></linearGradient>
          <linearGradient id="key" x2="0" y2="1"><stop stopColor="#8b8a88" /><stop offset="1" stopColor="#4d4c4a" /></linearGradient>
        </defs>
      </svg>
      <Panel>
        <WindowTitle>XCEED - Chromium</WindowTitle>
        <svg width="18" height="18" viewBox="0 0 18 18" fill="#dfdbd2">
          <path d="M5 1L9.500 6.500H6.500V12H3.500V6.500H.500ZM13 17L8.500 11.500H11.500V6H14.500V11.500H17.500Z" />
        </svg>
        <Keyboard>En</Keyboard>
        <svg width="25" height="14" viewBox="0 0 25 14">
          <rect x=".7" y="1.200" width="21" height="11.600" rx="2" fill="none" stroke="#dfdbd2" strokeWidth="1.300" />
          <rect x="22" y="4" width="2.500" height="6" rx="1" fill="none" stroke="#dfdbd2" />
          <rect x="3" y="3.300" width="16.500" height="7.400" fill="#8b897f" />
          <path d="M5 4L12 8L11 5L18 10L11 8L12 10.500Z" fill="#f5f3ee" />
        </svg>
        <svg width="20" height="16" viewBox="0 0 20 16" fill="#dfdbd2" style={{ marginLeft: 11 }}>
          <path d="M0 5H3L8 1V15L3 11H0Z" />
          <path d="M10 5.500Q12 8 10 10.500M12.800 3.500Q16 8 12.800 12.500M15.600 1.500Q20.500 8 15.600 14.500" fill="none" stroke="#dfdbd2" strokeWidth="1.400" />
        </svg>
        <Clock>7:52 PM</Clock>
        <svg width="17" height="17" viewBox="0 0 17 17" fill="none" stroke="#dfdbd2">
          <path d="M6 4.200A5 5 0 1 0 11 4.200" strokeWidth="2" />
          <path d="M8.500 1V8" strokeWidth="2" />
          <path d="M1 8.500H3M14 8.500H16M8.500 14V16.500M3 3L4.500 4.500M14 3L12.500 4.500M3 14L4.500 12.500M14 14L12.500 12.500" strokeWidth="2" />
        </svg>
      </Panel>
      <Body>
        <Dock>
          <Tile $bg="radial-gradient(circle at 60% 20%, #a5478c, #93207a 70%)"><UbuntuArt /></Tile>
          <Tile $bg="linear-gradient(#a8727a, #8b3947)"><FilesArt /><Running /></Tile>
          <Tile $bg={glass}><WriterArt /></Tile>
          <Tile $bg={glass}><SlackArt /></Tile>
          <Tile $bg={glass}><TerminalArt /></Tile>
          <Tile $bg="linear-gradient(#bd8d64, #b07339)"><SublimeArt /><Running /></Tile>
          <Tile $bg={glass}><VlcArt /></Tile>
          <Tile $bg="linear-gradient(#5c7fb8, #3d62b0)"><ChromiumArt /><Ticks /><Running $right /></Tile>
          <Tile $bg={glass}><GmailArt /></Tile>
          <Tile $bg={glass}><NotesArt /></Tile>
          <Tile $bg={glass} $gap><TrashArt /></Tile>
        </Dock>
        <Browser>
          <TabStrip>
            <Tab text="XCEED" z={4} />
            <Tab text="XCEED" z={3} />
            <Tab text="Oxygen — Free Website" z={2} />
            <Tab text="XCEED" z={1} />
            <Tab text="XCEED" z={5} active />
            <NewTab width="34" height="18" viewBox="0 0 34 18">
              <path d="M1 2Q1 1 2.500 1H26Q28 1 29 3L33 14Q33.500 16 32 16H9Q7 16 6 14Z" fill="#cccbc9" stroke="#8a8985" strokeWidth=".6" />
            </NewTab>
            <Profile>
              <svg width="10" height="12" viewBox="0 0 10 12" fill="#b9b8b4">
                <circle cx="5" cy="5" r="2.500" />
                <path d="M.5 12V10.500Q1 8.500 5 8.500T9.500 10.500V12Z" />
              </svg>
            </Profile>
          </TabStrip>
          <Toolbar>
            <Arrow />
            <Arrow flip />
            <svg width="15" height="16" viewBox="0 0 15 16" fill="none" stroke="#73726f" strokeWidth="2">
              <path d="M12.600 4.500A6 6 0 1 0 13.300 9.500" />
              <path d="M14.500 1V7H8.500Z" fill="#73726f" stroke="none" />
            </svg>
            <Address>
              <svg width="14" height="14" viewBox="0 0 14 14" fill="none" stroke="#6b6a67" strokeWidth="1.300">
                <circle cx="7" cy="7" r="6.200" />
                <path d="M7 6V10.500M7 3.200V5" strokeWidth="1.700" />
              </svg>
              <Url>file:///home/shruthi/xceed/maps.html</Url>
              <svg width="14" height="14" viewBox="0 0 14 14" fill="none" stroke="#73726f" strokeWidth="1.400">
                <path d="M7 1.300L8.600 5.300L13 5.600L9.600 8.400L10.700 12.700L7 10.300L3.300 12.700L4.400 8.400L1 5.600L5.400 5.300Z" />
              </svg>
            </Address>
            <svg width="16" height="16" viewBox="0 0 16 16">
              <rect width="16" height="16" rx="1" fill="#ee8a43" />
              <path d="M3 8L8 5L13 8L8 11Z" fill="none" stroke="#fff" strokeWidth="2" />
            </svg>
            <svg width="4" height="14" viewBox="0 0 4 14" fill="#6b6a67" style={{ marginLeft: 22 }}>
              <circle cx="2" cy="2" r="1.600" /><circle cx="2" cy="7" r="1.600" /><circle cx="2" cy="12" r="1.600" />
            </svg>
          </Toolbar>
          <Bookmarks>
            <Bookmark $w={70}>
              <svg width="13" height="13" viewBox="0 0 13 13">
                <path d="M0 0h3v3h-3ZM5 0h3v3h-3ZM10 0h3v3h-3Z" fill="#e8413a" />
                <path d="M0 5h3v3h-3ZM0 10h3v3h-3Z" fill="#2fa254" />
                <path d="M5 5h3v3h-3Z" fill="#3d86f0" />
                <path d="M10 5h3v3h-3ZM5 10h3v3h-3ZM10 10h3v3h-3Z" fill="#f4ab1d" />
              </svg>
              <BookmarkText $track={0.1}>Apps</BookmarkText>
            </Bookmark>
            {bookmarks.map(([t, w, fade, track]) => (
              <Bookmark key={t} $w={w}>
                <PageIcon />
                <BookmarkText $fade={fade} $track={track}>{t}</BookmarkText>
              </Bookmark>
            ))}
            <More>»</More>
          </Bookmarks>
          <Viewport>
            <Page>
              <Header>
                <Kurukshetra />
                <Nav>
                  <NavItem>HOME</NavItem>
                  <NavItem $on>XCEED</NavItem>
                  <NavItem>REGISTER</NavItem>
                  <NavItem>CONTACTUS</NavItem>
                  <NavItem>SPONSORS</NavItem>
                </Nav>
                <Unesco />
              </Header>
              <MapFrame>
                <IndiaMap />
                <MapType>
                  <MapButton $on>Map</MapButton>
                  <MapButton>Satellite</MapButton>
                </MapType>
              </MapFrame>
            </Page>
            <Scroll>
              <svg width="7" height="4" viewBox="0 0 7 4"><path d="M0 4L3.500 0L7 4Z" fill="#505050" /></svg>
              <Thumb />
              <svg width="7" height="4" viewBox="0 0 7 4"><path d="M0 0L3.500 4L7 0Z" fill="#505050" /></svg>
            </Scroll>
          </Viewport>
        </Browser>
      </Body>
    </Desktop>
  );
}
